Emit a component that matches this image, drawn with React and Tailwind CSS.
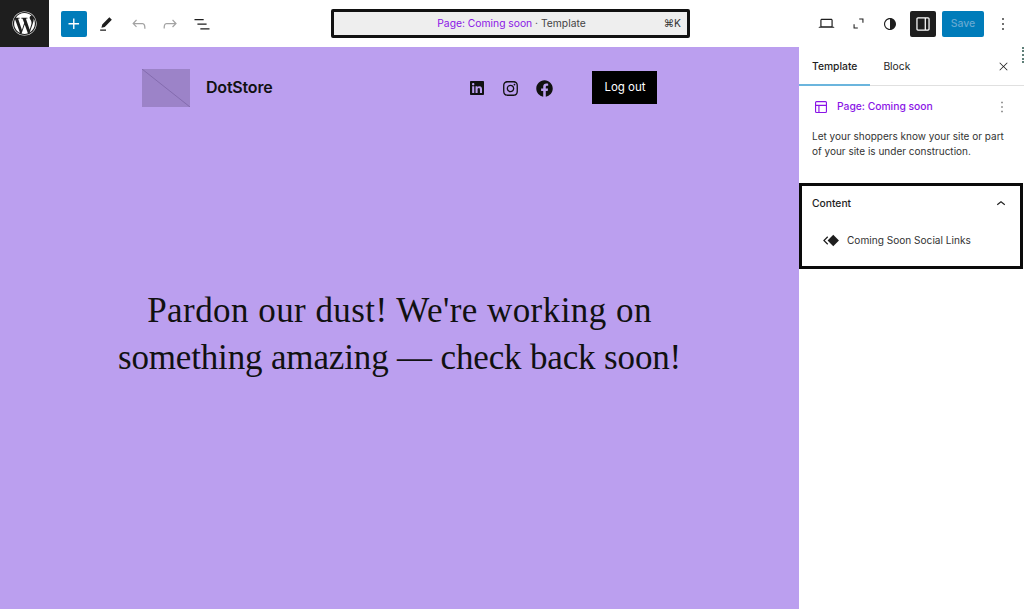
import { FaWordpress, FaLinkedin, FaInstagram, FaFacebook } from 'react-icons/fa';

const Icon = ({ d, size = 24, className = '' }) => (
  <svg width={size} height={size} viewBox="0 0 24 24" fill="currentColor" className={className}>
    <path d={d} />
  </svg>
);

const icons = {
  plus: 'M11 12.5V17.5H12.5V12.5H17.5V11H12.5V6H11V11H6V12.5H11Z',
  pencil: 'm19 7-3-3-8.5 8.5-1 4 4-1L19 7Zm-7 11.5H5V20h7v-1.5Z',
  undo: 'M18.3 11.7c-.6-.6-1.4-.9-2.3-.9H6.7l2.9-3.3-1.1-1-4.5 5L8.5 16l1-1-2.7-2.7H16c.5 0 .9.2 1.3.5 1 1 1 3.4 1 4.5v.3h1.5v-.2c0-1.5 0-4.3-1.5-5.7z',
  redo: 'M15.6 6.5l-1.1 1 2.9 3.3H8c-.9 0-1.7.3-2.3.9-1.4 1.5-1.4 4.2-1.4 5.6v.2h1.5v-.3c0-1.1 0-3.5 1-4.5.3-.3.7-.5 1.3-.5h9.2L14.5 15l1.1 1.1 4.6-4.6-4.6-5z',
  list: 'M3 6h11v1.5H3V6Zm3.5 5.5h11V13h-11v-1.5ZM21 17H10v1.5h11V17Z',
  laptop: 'M20.5 16h-.7V8c0-1.1-.9-2-2-2H6.2c-1.1 0-2 .9-2 2v8h-.7c-.8 0-1.5.7-1.5 1.5h20c0-.8-.7-1.5-1.5-1.5zM5.7 8c0-.3.2-.5.5-.5h11.6c.3 0 .5.2.5.5v7.6H5.7V8z',
  expand: 'M13 5h6v6h-1.5V6.5H13V5ZM5 13h1.5v4.5H11V19H5v-6Z',
  styles: 'M12 4c-4.4 0-8 3.6-8 8s3.6 8 8 8 8-3.6 8-8-3.6-8-8-8zm0 14.5c-3.6 0-6.5-2.9-6.5-6.5S8.4 5.5 12 5.5v13z',
  drawer: 'M18 4H6c-1.1 0-2 .9-2 2v12c0 1.1.9 2 2 2h12c1.1 0 2-.9 2-2V6c0-1.1-.9-2-2-2zm-4 14.5H6c-.3 0-.5-.2-.5-.5V6c0-.3.2-.5.5-.5h8v13zm4.5-.5c0 .3-.2.5-.5.5h-2.5v-13H18c.3 0 .5.2.5.5v12z',
  more: 'M13 19h-2v-2h2v2zm0-6h-2v-2h2v2zm0-6h-2V5h2v2z',
  close: 'm13.06 12 6.47-6.47-1.06-1.06L12 10.94 5.53 4.47 4.47 5.53 10.94 12l-6.47 6.47 1.06 1.06L12 13.06l6.47 6.47 1.06-1.06L13.06 12Z',
  layout: 'M18 5.5H6a.5.5 0 00-.5.5v3h13V6a.5.5 0 00-.5-.5zm.5 5H10v8h8a.5.5 0 00.5-.5v-7.5zm-10 0h-3V18a.5.5 0 00.5.5h2.5v-8zM6 4h12a2 2 0 012 2v12a2 2 0 01-2 2H6a2 2 0 01-2-2V6a2 2 0 012-2z',
  chevronUp: 'M6.5 12.4L12 8l5.5 4.4-.9 1.2L12 10l-4.5 3.6-1-1.2z',
  pattern: 'M14 5.5 20.5 12 14 18.5 7.5 12 14 5.5ZM7.2 7.2l1 1L4.4 12l3.8 3.8-1 1L2.4 12l4.8-4.8Z',
};

const App = () => {
  return (
    <div className="flex flex-col w-[1024px] h-[609px] overflow-hidden bg-white text-[#1e1e1e] font-['Inter','Liberation_Sans',sans-serif]">
      <header className="flex items-center h-[47px] shrink-0">
        <div className="flex items-center justify-center w-[49px] h-[47px] bg-[#1e1e1e] text-white">
          <FaWordpress size={25} />
        </div>
        <div className="flex items-center justify-center w-[26px] h-[26px] ml-[12px] rounded-[2px] bg-[#007cba] text-white">
          <Icon d={icons.plus} size={22} />
        </div>
        <Icon d={icons.pencil} size={20} className="ml-[9px]" />
        <Icon d={icons.undo} size={20} className="ml-[13px] text-[#a3a3a3]" />
        <Icon d={icons.redo} size={20} className="ml-[11px] text-[#a3a3a3]" />
        <Icon d={icons.list} size={20} className="ml-[12px]" />
        <div className="relative flex items-center justify-center w-[359px] h-[29px] ml-[119px] border-[3px] border-[#111] rounded-[2px] bg-[#eeeeee] text-[10.3px] pl-[2px]">
          <span className="text-[#8a14e6]">Page: Coming soon</span>
          <span className="text-[#444]">&nbsp;· Template</span>
          <span className="absolute right-[6px] text-[#333]">⌘K</span>
        </div>
        <Icon d={icons.laptop} size={19} className="ml-[127px]" />
        <Icon d={icons.expand} size={17} className="ml-[14px]" />
        <Icon d={icons.styles} size={18} className="ml-[14px]" />
        <div className="flex items-center justify-center w-[26px] h-[26px] ml-[11px] rounded-[2px] bg-[#1e1e1e] text-white">
          <Icon d={icons.drawer} size={20} />
        </div>
        <div className="flex items-center justify-center w-[42px] h-[26px] ml-[6px] rounded-[2px] bg-[#007cba] text-[#66a9d2] text-[10.5px] font-medium">
          Save
        </div>
        <Icon d={icons.more} size={20} className="ml-[9px]" />
      </header>

      <div className="flex flex-1 min-h-0">
        <main className="flex flex-col w-[799px] bg-[#bb9fef]">
          <div className="flex items-center h-[38px] mt-[22px] ml-[142px]">
            <svg width="48" height="38" viewBox="0 0 48 38" className="shrink-0">
              <rect width="48" height="38" fill="#9c83c8" />
              <line x1="0" y1="0" x2="48" y2="38" stroke="#7d66a8" strokeWidth="0.8" />
            </svg>
            <span className="ml-[16px] mb-[2px] text-[16px] font-semibold tracking-[-0.2px] text-[#111]">DotStore</span>
            <div className="flex items-center ml-[197px] text-[#111]">
              <FaLinkedin size={16} />
              <FaInstagram size={17} className="ml-[17px]" />
              <FaFacebook size={17} className="ml-[17px]" />
            </div>
            <div className="flex items-center justify-center w-[65px] h-[33px] ml-[39px] mb-[1px] bg-black text-white text-[11.5px]">
              Log out
            </div>
          </div>
          <h1 className="mt-[181px] text-center text-[35px] leading-[46.5px] font-normal text-[#111] font-['Liberation_Serif',serif]">
            <span className="tracking-[0.45px]">Pardon our dust! We're working on</span>
            <br />
            <span className="tracking-[-0.15px]">something amazing — check back soon!</span>
          </h1>
        </main>

        <aside className="relative flex flex-col flex-1 bg-white text-[10.3px]">
          <div className="flex items-center h-[39px] pt-[1px] border-b border-[#e0e0e0] relative">
            <span className="ml-[13px] font-medium">Template</span>
            <span className="ml-[26px]">Block</span>
            <Icon d={icons.close} size={13} className="ml-auto mr-[14px]" />
            <div className="absolute left-0 bottom-[-1px] w-[71px] h-[2px] bg-[#6bb5dd]" />
          </div>
          <div className="flex items-center mt-[11px] ml-[13px] h-[20px]">
            <Icon d={icons.layout} size={18} className="text-[#8a14e6]" />
            <span className="ml-[7px] text-[#8a14e6] font-medium">Page: Coming soon</span>
            <Icon d={icons.more} size={18} className="ml-auto mr-[13px] text-[#777]" />
          </div>
          <p className="mx-[13px] mt-[12px] text-[10px] leading-[15px] whitespace-nowrap text-[#333]">
            Let your shoppers know your site or part<br />of your site is under construction.
          </p>
          <div className="flex flex-col h-[86px] w-[224px] mt-[24px] border-[3px] border-[#0a0a0a] bg-white">
            <div className="flex items-center justify-between h-[36px] pl-[10px] pr-[10px] font-medium">
              Content
              <Icon d={icons.chevronUp} size={18} />
            </div>
            <div className="flex items-center mt-[8px] ml-[19px]">
              <Icon d={icons.pattern} size={21} />
              <span className="ml-[5px] text-[10.1px] text-[#333]">Coming Soon Social Links</span>
            </div>
          </div>
          {/* sliver of the scrollbar at the window edge */}
          <div className="absolute right-0 top-0 w-[2px] h-[16px] border-r-2 border-dotted border-[#5f7f78]" />
        </aside>
      </div>
    </div>
  );
};

export default App;
